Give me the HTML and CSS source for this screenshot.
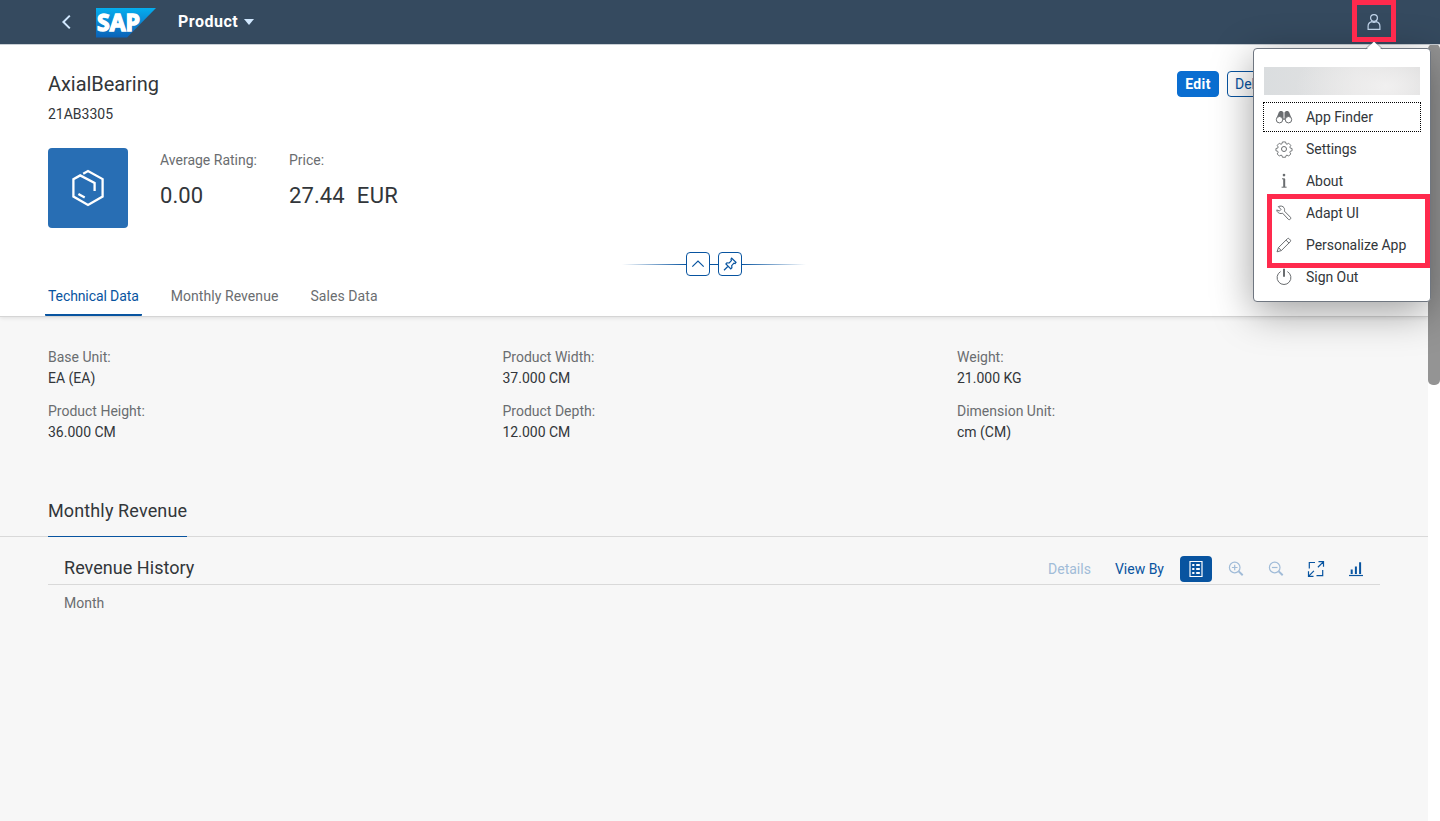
FILE: index.html
```html
<!DOCTYPE html>
<html lang="en">
<head>
<meta charset="utf-8">
<title>Product</title>
<link rel="stylesheet" href="styles.css">
</head>
<body>
<div class="app">
  <header class="shell">
    <svg class="back" width="10" height="16" viewBox="0 0 10 16"><path d="M8.8 1.6 2.4 8l6.4 6.4"/></svg>
    <svg class="logo" width="60" height="30" viewBox="0 0 60 30">
      <defs><linearGradient id="lg" x1="0" y1="0" x2="0" y2="1"><stop offset="0" stop-color="#04aeee"/><stop offset=".5" stop-color="#0b86d2"/><stop offset="1" stop-color="#0a62b8"/></linearGradient></defs>
      <path fill="url(#lg)" d="M0 0h60L31 29.6H0z"/>
      <text x="1" y="23" textLength="43" lengthAdjust="spacingAndGlyphs">SAP</text>
    </svg>
    <span class="shell-title">Product</span>
    <span class="caret"></span>
    <button class="user">
      <svg width="16" height="18" viewBox="0 0 16 18"><circle cx="8" cy="5" r="3.4"/><path d="M2.1 16.4v-3.2q0-3.6 3.8-4.5 2.1 1.2 4.2 0 3.8.9 3.8 4.5v3.2z"/></svg>
    </button>
  </header>

  <div class="viewport">
    <main class="page">
      <section class="object-header">
        <div class="title-row">
          <div>
            <h1>AxialBearing</h1>
            <p class="subtitle">21AB3305</p>
          </div>
          <div class="actions"><button class="btn primary">Edit</button><button class="btn">Delete</button></div>
        </div>
        <div class="facets">
          <div class="avatar">
            <svg width="34" height="38" viewBox="0 0 34 38"><path d="M12.2 4.7 17 2l14.6 8.1v17.4L17 36 2.4 27.5V10.2l6.8-3.8L23.6 14v8"/><path d="m7.4 25 6.3 3.6"/></svg>
          </div>
          <div class="facet"><span class="label">Average Rating:</span><span class="number">0.00</span></div>
          <div class="facet"><span class="label">Price:</span><span class="number">27.44<span class="unit">EUR</span></span></div>
        </div>
        <div class="header-tools">
          <span class="rule left"></span>
          <button class="tool"><svg width="14" height="14" viewBox="0 0 14 14"><path d="M1.3 9.7 7 4l5.7 5.7"/></svg></button>
          <span class="rule mid"></span>
          <button class="tool"><svg width="14" height="14" viewBox="0 0 14 14"><path d="M8.7 1.2 13 5.4l-.9 1.1-1.2-.3-2.2 2.4.2 2.2-1.1 1-4.9-4.9 1-1.1 2.3.2L8.4 3.6l-.4-1.4zM5.3 9 1 13.2"/></svg></button>
          <span class="rule right"></span>
        </div>
        <nav class="tabs">
          <a class="tab active">Technical Data</a>
          <a class="tab">Monthly Revenue</a>
          <a class="tab">Sales Data</a>
        </nav>
      </section>

      <section class="form">
        <div class="field"><span class="label">Base Unit:</span><span>EA (EA)</span></div>
        <div class="field"><span class="label">Product Width:</span><span>37.000 CM</span></div>
        <div class="field"><span class="label">Weight:</span><span>21.000 KG</span></div>
        <div class="field"><span class="label">Product Height:</span><span>36.000 CM</span></div>
        <div class="field"><span class="label">Product Depth:</span><span>12.000 CM</span></div>
        <div class="field"><span class="label">Dimension Unit:</span><span>cm (CM)</span></div>
      </section>

      <div class="section-head"><h2>Monthly Revenue</h2></div>

      <section class="chart">
        <div class="chart-bar">
          <h3>Revenue History</h3>
          <span class="link disabled">Details</span>
          <span class="link">View By</span>
          <button class="icon on"><svg width="16" height="18" viewBox="0 0 16 18"><path d="M2 1.5h12v15H2z"/><path class="thick" d="M4.2 5h2.2M4.2 9h2.2M4.2 13h2.2M8.2 5h3.6M8.2 9h3.6M8.2 13h3.6"/></svg></button>
          <button class="icon off"><svg width="16" height="16" viewBox="0 0 16 16"><circle cx="6.7" cy="6.5" r="5.3"/><path d="M3.9 6.5h5.6M6.7 3.7v5.6"/><path class="handle" d="m10.7 10.4 4 3.9"/></svg></button>
          <button class="icon off"><svg width="16" height="16" viewBox="0 0 16 16"><circle cx="6.7" cy="6.5" r="5.3"/><path d="M3.9 6.5h5.6"/><path class="handle" d="m10.7 10.4 4 3.9"/></svg></button>
          <button class="icon"><svg width="18" height="18" viewBox="0 0 18 18"><path d="M8 2.5H2.3v6M15.7 10v5.7H9.5M11.5 1.7h5v5M16.3 1.9l-5.4 5.3M6.5 16.3h-5v-5M1.7 16.1l5.2-5.2"/></svg></button>
          <button class="icon"><svg width="16" height="16" viewBox="0 0 16 16"><path class="base" d="M1 14.5h14"/><path class="bars" d="M3.7 13V8.4M7.9 13V5.4M12.1 13V1.2"/></svg></button>
        </div>
        <span class="label month">Month</span>
      </section>
    </main>
    <div class="scrollbar"><div class="thumb"></div></div>
  </div>

  <div class="popover">
    <svg class="arrow" width="18" height="10" viewBox="0 0 18 10"><path class="fill" d="M1 10 9 1.5 17 10z"/><path class="edge" d="M.5 8.8 9 .8l8.5 8"/></svg>
    <div class="blurred"></div>
    <ul class="menu">
      <li class="focused"><svg width="18" height="16" viewBox="0 0 18 16"><path class="solid" d="M3.8 3.2 5 2h2.2l1 1.5h1.6l1-1.5H13l1.2 1.2 2.4 6.2-3.2-1.2-2.5 2.6H7.1L4.6 8.2 1.4 9.4z"/><circle class="lens" cx="4.5" cy="10.7" r="3.2"/><circle class="lens" cx="13.5" cy="10.7" r="3.2"/><path class="gap" d="M9 3.5v6"/></svg>App Finder</li>
      <li><svg width="18" height="18" viewBox="0 0 18 18"><path d="M7.3 1.3h3.4l.5 2 1.1.5 1.8-1.1 2.3 2.3-1 1.8.4 1.2 2 .5v2.4l-2 .6-.4 1.1 1 1.8-2.3 2.3-1.8-1-1.1.4-.5 1.9H7.3l-.5-1.9-1.1-.4-1.8 1-2.3-2.3 1-1.8-.4-1.1-2-.6V8.5l2-.5.4-1.2-1-1.8L3.9 2.7l1.8 1.1 1.1-.5z" transform="translate(.75 .75) scale(.917)"/><circle cx="9" cy="9" r="2.5"/></svg>Settings</li>
      <li><svg width="18" height="16" viewBox="0 0 18 16"><circle class="solid" cx="9" cy="2.1" r="1.3"/><path class="stem" d="M9.2 6v8"/><path d="M7 5.8h2.8M6.6 14.2h5"/></svg>About</li>
      <li><svg width="18" height="16" viewBox="0 0 18 16"><path d="M3.3 1.6C5.5.6 7.9 1 9 2.7c.7 1.1.7 2.3.4 3.4l6.1 6.2q.6 1.1-.2 1.9-.9.8-1.9.2L7.6 8.2C5.7 9 3.4 8.4 2.2 6.5q-.4-.7-.4-1.6l2.6 1.2L6 4.4z"/></svg>Adapt UI</li>
      <li><svg width="18" height="16" viewBox="0 0 18 16"><path d="m2 14.8 1.5-4.2 9-9q.8-.6 1.6.1l1.3 1.4q.6.7-.1 1.5l-9 9zM11 3.1l3 3M3.5 10.6l2.8 3"/></svg>Personalize App</li>
      <li><svg width="18" height="18" viewBox="0 0 18 18"><path d="M5.6 3.6a6.9 6.9 0 1 0 6.8 0"/><path class="stem" d="M9 .8v8"/></svg>Sign Out</li>
    </ul>
  </div>
  <div class="mark mark-user"></div>
  <div class="mark mark-menu"></div>
</div>
</body>
</html>
```
FILE: styles.css
```css
* { box-sizing: border-box; }
body { margin: 0; font: 14px/20px Roboto, "Liberation Sans", sans-serif; color: #32363a; overflow: hidden; }
h1, h2, h3, p, ul { margin: 0; padding: 0; font-weight: 400; }
button { font: inherit; padding: 0; margin: 0; border: 0; background: none; display: flex; align-items: center; justify-content: center; }
svg { display: block; fill: none; flex: none; }
.app { position: relative; width: 1440px; height: 821px; display: flex; flex-direction: column; overflow: hidden; }

.shell { height: 44px; background: #354a5f; box-shadow: 0 1px 0 #c9cfd5; position: relative; display: flex; align-items: center; padding: 0 44px 0 61px; }
.back path { stroke: #d1e8ff; stroke-width: 2; }
.logo { margin: 2px 22px 0 25px; overflow: visible; }
.logo text { font: 700 23px "Open Sans", sans-serif; fill: #fff; stroke: #fff; stroke-width: 1.4px; }
.shell-title { color: #fff; font-size: 16px; font-weight: 700; letter-spacing: .5px; width: 61px; white-space: nowrap; }
.caret { border: 5px solid transparent; border-top: 6px solid #d1e8ff; border-bottom: 0; margin-left: 5px; }
.user { margin-left: auto; width: 44px; height: 44px; }
.user path, .user circle { stroke: #c3d7ed; stroke-width: 1.2; }

.viewport { flex: 1; display: flex; }
.page { width: 1428px; background: #f7f7f7; }
.scrollbar { width: 12px; background: #fff; }
.thumb { height: 341px; background: #949494; border-radius: 5px; }

.object-header { height: 273px; background: #fff; padding: 26px 48px 0; border-bottom: 1px solid #d5d5d5; box-shadow: 0 1px 4px rgba(0,0,0,.1); display: flex; flex-direction: column; }
.title-row { display: flex; justify-content: space-between; height: 78px; }
h1 { font-size: 20px; line-height: 28px; letter-spacing: -.05px; }
.subtitle { margin-top: 6px; }
.actions { display: flex; gap: 8px; margin: 1px 93px 0 0; }
.btn { height: 26px; width: 42px; border: 1px solid #0854a0; border-radius: 4px; color: #0854a0; }
.btn:last-child { width: 60px; justify-content: flex-start; padding-left: 7px; }
.btn.primary { background: #0a6ed1; border-color: #0a6ed1; color: #fff; font-weight: 700; letter-spacing: .4px; }
.facets { display: flex; gap: 32px; height: 104px; }
.avatar { width: 80px; height: 80px; border-radius: 4px; background: #286eb4; display: flex; align-items: center; justify-content: center; }
.avatar path { stroke: #fff; stroke-width: 2.3; }
.facet { display: flex; flex-direction: column; padding-top: 2px; }
.label { color: #6a6d70; }
.number { font-size: 22px; line-height: 28px; margin-top: 12px; letter-spacing: .1px; }
.unit { margin-left: 12px; letter-spacing: .4px; }
.header-tools { display: flex; align-items: center; height: 24px; margin-left: 574px; }
.tool { width: 24px; height: 24px; border: 1px solid #0854a0; border-radius: 4px; }
.tool path { stroke: #0854a0; stroke-width: 1.2; }
.rule { height: 1px; background: #0854a0; width: 64px; }
.rule.mid { width: 8px; }
.rule.left { background: linear-gradient(to left, #0854a0, transparent); }
.rule.right { background: linear-gradient(to right, #0854a0, transparent); }
.tabs { display: flex; gap: 26px; margin-left: -3px; height: 40px; }
.tab { padding: 10px 3px 0; color: #6a6d70; border-bottom: 2px solid transparent; white-space: nowrap; letter-spacing: .07px; }
.tab.active { color: #0854a0; border-color: #0854a0; border-radius: 1px; letter-spacing: -.1px; }

.form { display: grid; grid-template-columns: repeat(3, 454.5px); row-gap: 12px; padding: 30px 0 0 48px; height: 176px; align-content: start; }
.field { display: flex; flex-direction: column; line-height: 21px; }
.section-head { height: 44px; padding-left: 48px; border-bottom: 1px solid #d9d9d9; display: flex; }
h2 { font-size: 18px; line-height: 36px; height: 44px; border-bottom: 1px solid #0854a0; letter-spacing: .13px; }
.chart { padding: 0 48px; }
.chart-bar { height: 48px; border-bottom: 1px solid #d9d9d9; padding: 16px 8px 0 16px; display: flex; align-items: center; }
h3 { font-size: 18px; line-height: 28px; margin: -2px auto 0 0; letter-spacing: .04px; }
.link { color: #0854a0; margin-right: 16px; }
.link.disabled { color: #a1bcd8; margin-right: 24px; }
.icon { width: 32px; height: 26px; margin-right: 8px; border-radius: 4px; }
.icon:last-child { margin-right: 0; }
.icon path, .icon circle { stroke: #0854a0; stroke-width: 1.2; }
.icon.on { background: #0854a0; }
.icon.on path { stroke: #fff; }
.icon.off path, .icon.off circle { stroke: #a1bcd8; }
.icon .thick { stroke-width: 2; }
.icon .handle, .icon .bars { stroke-width: 2; }
.month { display: block; padding: 8px 16px; }

.popover { position: absolute; left: 1253px; top: 48px; width: 178px; height: 254px; background: #fff; border: 1px solid #6f7680; border-radius: 4px; box-shadow: 0 10px 40px rgba(0,0,0,.38); padding: 18px 9px 0; }
.arrow { position: absolute; left: 111px; top: -9px; }
.arrow .fill { fill: #fff; }
.arrow .edge { stroke: #6f7680; stroke-width: .6; }
.blurred { height: 28px; margin: 0 1px; background: radial-gradient(ellipse 90px 50px at 78% 70%, #f1f0f0, rgba(241,240,240,0)), linear-gradient(90deg, #dadddf, #e2e2e2 60%, #d6d6d6); }
.menu { list-style: none; padding-top: 6px; }
.menu li { display: flex; align-items: center; height: 32px; gap: 13px; padding-left: 12px; white-space: nowrap; position: relative; letter-spacing: -.04px; }
.menu .focused::after { content: ""; position: absolute; inset: 1px 0; border: 1px dotted #000; }
.menu svg { stroke: #6a6d70; stroke-width: 1; }
.menu .solid { fill: #6a6d70; stroke: none; }
.menu .lens { fill: #fff; }
.menu .gap { stroke: #fff; }
.menu .stem { stroke-width: 2; }
.mark { position: absolute; border: 5px solid #ff2a4d; }
.mark-user { left: 1352px; top: 0; width: 44px; height: 42px; }
.mark-menu { left: 1267px; top: 194px; width: 163px; height: 74px; }
```
